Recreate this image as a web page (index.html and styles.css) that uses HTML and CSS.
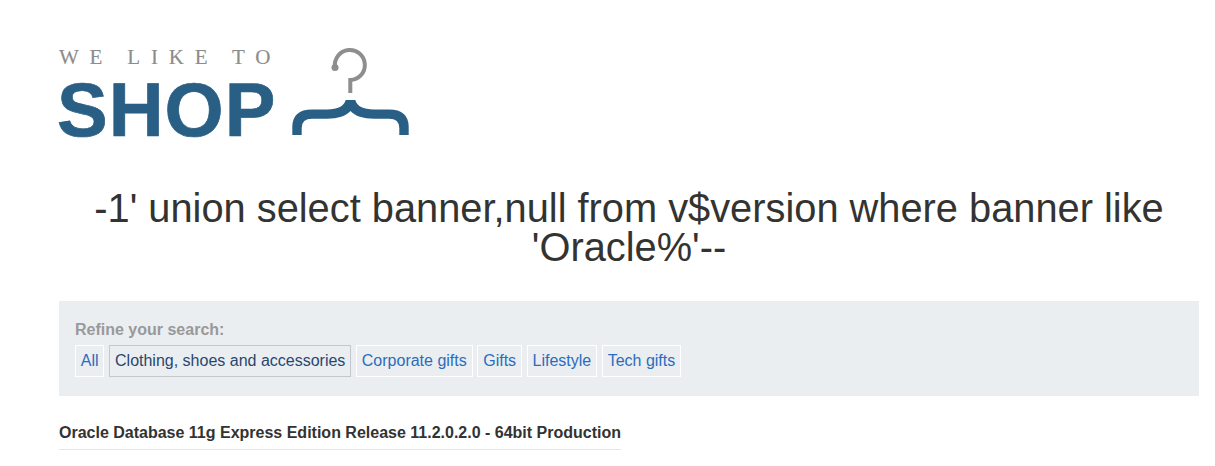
FILE: index.html
```html
<!DOCTYPE html>
<html lang="en">
<head>
<meta charset="utf-8">
<title>We Like To Shop</title>
<link rel="stylesheet" href="styles.css">
</head>
<body>
<div class="page">
  <header class="logo">
    <div class="logo-text">
      <div class="logo-small">WE LIKE TO</div>
      <div class="logo-big">SHOP</div>
    </div>
    <svg class="hanger" width="120" height="92" viewBox="290 46 120 92" aria-hidden="true">
      <path class="hook" d="M335 67 A15 15 0 1 1 350.3 80 V93"/>
      <circle class="ball" cx="335" cy="67.5" r="3.5"/>
      <path class="brace" d="M292.3 135 V127 Q292.3 109.5 312 109.5 H327 C338 109.5 344 106 345.7 100 H355.3 C357 106 363 109.5 374 109.5 H389 Q408.7 109.5 408.7 127 V135 H399.3 V128 Q399.3 118.7 389 118.7 H374 C363 118.7 355 116 350.5 111 C346 116 338 118.7 327 118.7 H312 Q301.7 118.7 301.7 128 V135 Z"/>
    </svg>
  </header>
  <h1 class="title">-1' union select banner,null from v$version where banner like 'Oracle%'--</h1>
  <section class="filters">
    <div class="filters-label">Refine your search:</div>
    <nav class="filter-list">
      <a class="filter" href="#">All</a>
      <a class="filter active" href="#">Clothing, shoes and accessories</a>
      <a class="filter" href="#">Corporate gifts</a>
      <a class="filter" href="#">Gifts</a>
      <a class="filter" href="#">Lifestyle</a>
      <a class="filter" href="#">Tech gifts</a>
    </nav>
  </section>
  <table class="results">
    <tr><th>Oracle Database 11g Express Edition Release 11.2.0.2.0 - 64bit Production</th></tr>
  </table>
</div>
</body>
</html>
```
FILE: styles.css
```css
html, body {
  margin: 0;
  padding: 0;
  background: #fff;
  overflow: hidden;
}
body {
  font-family: "Liberation Sans", Arial, sans-serif;
  color: #333332;
  font-size: 16px;
}
.page {
  padding: 46px 16px 0 59px;
}
.logo {
  display: flex;
  align-items: flex-start;
  height: 92px;
}
.logo-text {
  width: 231px;
  flex: none;
}
.logo-small {
  font-family: "Liberation Serif", serif;
  font-size: 21px;
  line-height: 22px;
  letter-spacing: 10.8px;
  word-spacing: -2px;
  color: #8c8c8c;
  -webkit-text-stroke: 0.15px #8c8c8c;
  white-space: nowrap;
}
.logo-big {
  font-weight: 700;
  font-size: 76px;
  line-height: 76px;
  letter-spacing: 1px;
  color: #2a5f85;
  -webkit-text-stroke: 0.7px #2a5f85;
  margin: 4px 0 0 -2px;
}
.hanger {
  display: block;
  flex: none;
}
.hook {
  fill: none;
  stroke: #8e8e8e;
  stroke-width: 4;
}
.ball {
  fill: #8e8e8e;
}
.brace {
  fill: #2a5f85;
}
.title {
  margin: 51px 0 0;
  font-weight: 400;
  font-size: 39.8px;
  line-height: 39px;
  text-align: center;
}
.filters {
  margin-top: 34px;
  background: #ebeef1;
  padding: 20px 16px 24px;
  height: 51px;
}
.filters-label {
  font-weight: 700;
  color: #999;
  line-height: 18px;
}
.filter-list {
  display: flex;
  gap: 4.85px;
  margin-top: 6px;
}
.filter {
  display: block;
  padding: 0 4.8px;
  line-height: 30px;
  border: 1px solid #fff;
  color: #2a6cbd;
  text-decoration: none;
}
.filter.active {
  border-color: #c3c8cc;
  color: #27476f;
}
.results {
  margin-top: 28px;
  border-collapse: collapse;
}
.results th {
  padding: 0 0 7px;
  font-size: 16px;
  line-height: 18px;
  text-align: left;
  white-space: nowrap;
  border-bottom: 1px solid #e6e6e6;
}
```
